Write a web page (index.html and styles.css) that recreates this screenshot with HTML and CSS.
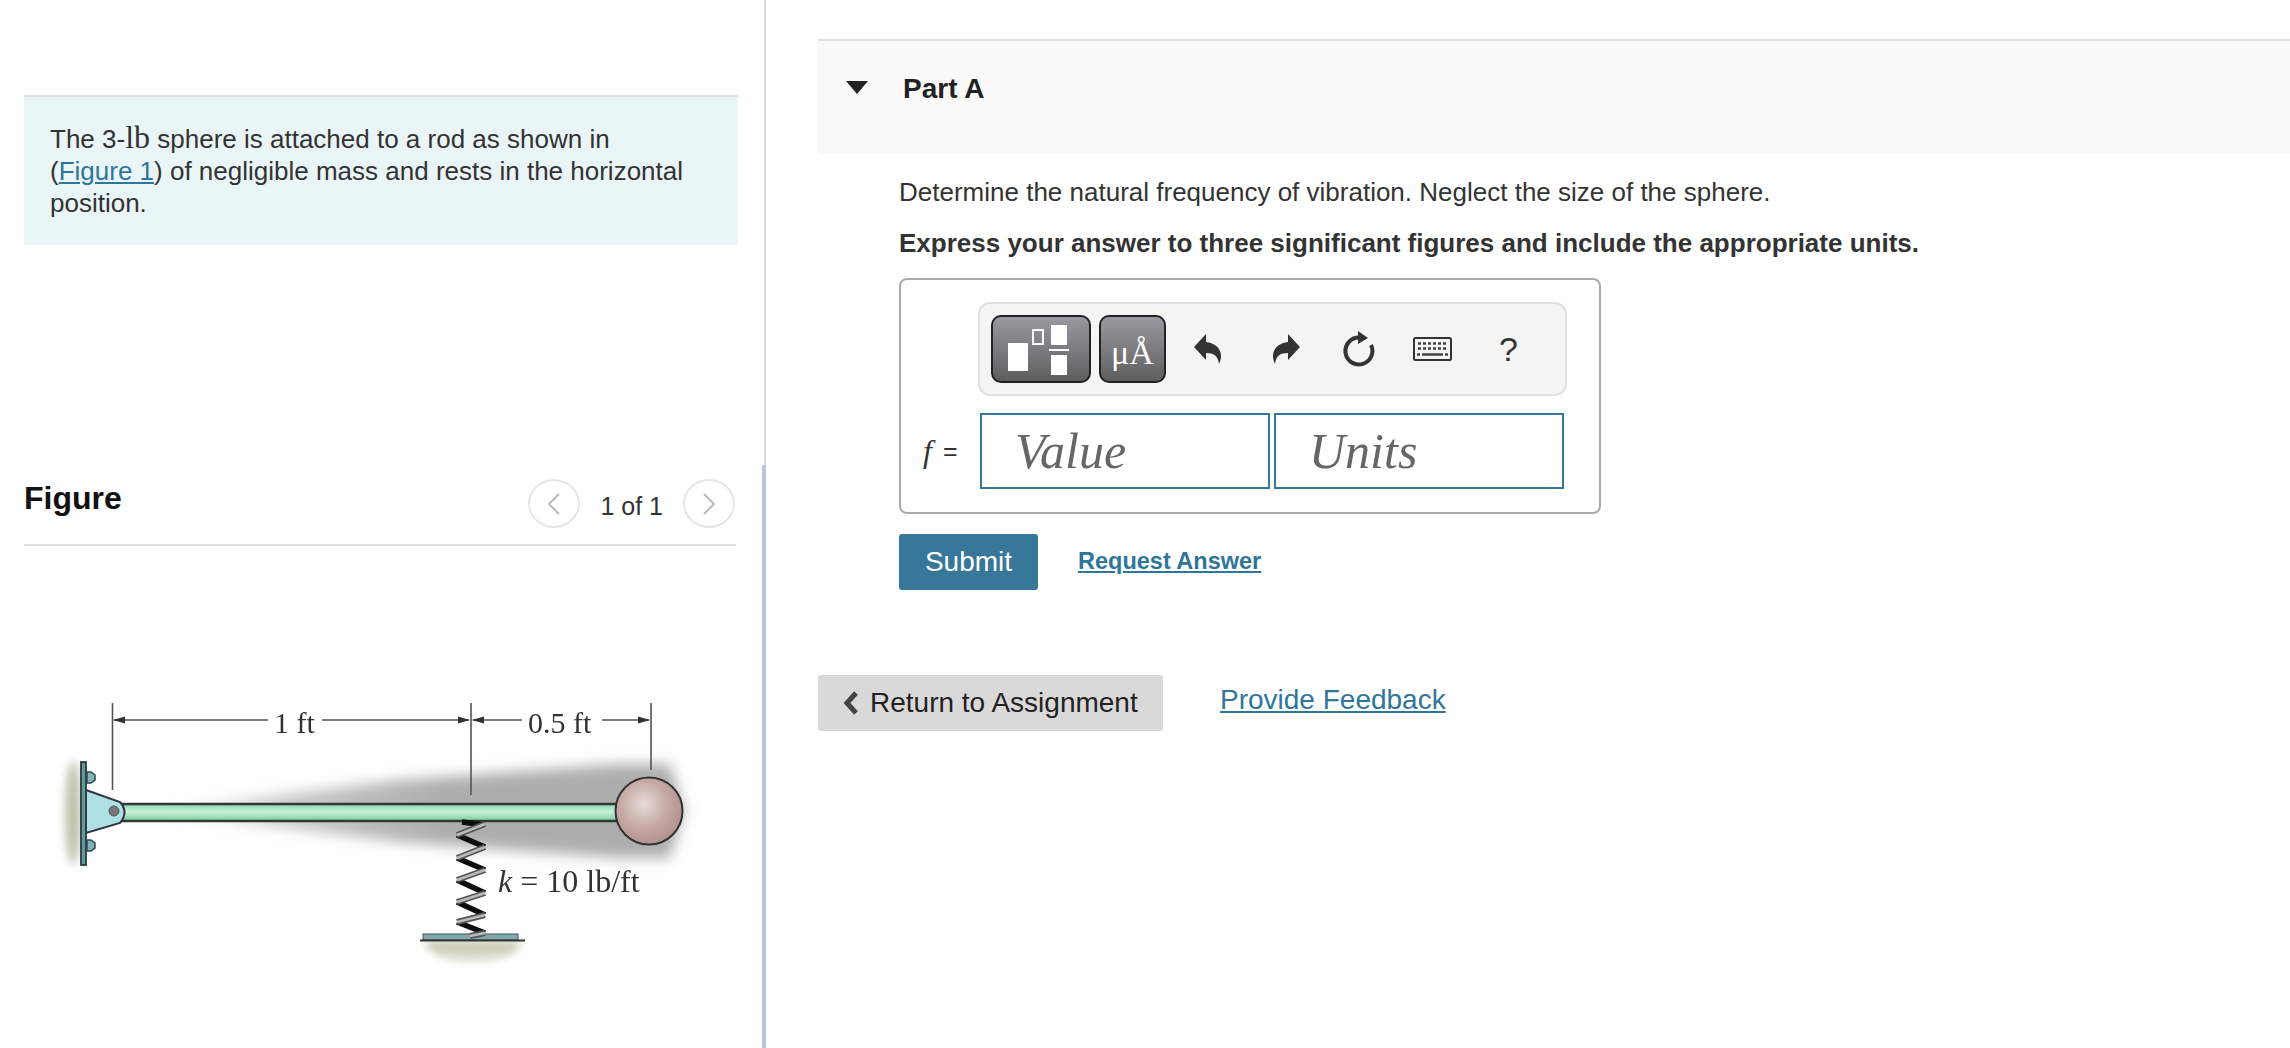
FILE: index.html
```html
<!DOCTYPE html>
<html lang="en">
<head>
<meta charset="utf-8">
<title>Part A</title>
<link rel="stylesheet" href="styles.css">
</head>
<body>
<main class="page">
  <section class="left">
    <div class="intro">
      <p>The 3-<span class="serif">lb</span> sphere is attached to a rod as shown in (<a href="#">Figure 1</a>) of negligible mass and rests in the horizontal position.</p>
    </div>
    <div class="fig-head">
      <h2>Figure</h2>
      <div class="pager">
        <span class="round"><svg width="16" height="24" viewBox="0 0 16 24"><path d="M13 2 3 12l10 10" fill="none" stroke="#bbb" stroke-width="2"/></svg></span>
        <span class="count">1 of 1</span>
        <span class="round"><svg width="16" height="24" viewBox="0 0 16 24"><path d="m3 2 10 10L3 22" fill="none" stroke="#bbb" stroke-width="2"/></svg></span>
      </div>
    </div>
    <svg class="figure" width="740" height="300" viewBox="0 680 740 300">
      <defs>
        <filter id="soft" x="-5%" y="-5%" width="110%" height="110%"><feGaussianBlur stdDeviation="0.7"/></filter>
        <filter id="shade" x="-10%" y="-40%" width="120%" height="180%"><feGaussianBlur stdDeviation="7"/></filter>
        <filter id="wall" x="-150%" y="-30%" width="400%" height="160%"><feGaussianBlur stdDeviation="4"/></filter>
        <linearGradient id="rod" x1="0" y1="0" x2="0" y2="1">
          <stop offset="0" stop-color="#86d4a4"/><stop offset=".45" stop-color="#caf2d8"/><stop offset="1" stop-color="#7ccb9a"/>
        </linearGradient>
        <linearGradient id="wake" x1="0" y1="0" x2="1" y2="0">
          <stop offset="0" stop-color="#b2b2b2" stop-opacity="0"/><stop offset=".25" stop-color="#b2b2b2" stop-opacity=".7"/><stop offset=".55" stop-color="#adadad"/><stop offset="1" stop-color="#adadad"/>
        </linearGradient>
        <radialGradient id="ball" cx=".42" cy=".4" r=".62">
          <stop offset="0" stop-color="#e6dcda"/><stop offset=".55" stop-color="#c7aaa6"/><stop offset="1" stop-color="#b1918c"/>
        </radialGradient>
        <linearGradient id="ground" x1="0" y1="0" x2="0" y2="1">
          <stop offset="0" stop-color="#bfc2a2"/><stop offset="1" stop-color="#e6e7da"/>
        </linearGradient>
      </defs>
      <g filter="url(#soft)">
        <path d="M150 811 400 780 620 764 670 764 684 811 670 858 620 858 400 842Z" fill="url(#wake)" filter="url(#shade)"/>
        <ellipse cx="73" cy="813" rx="8" ry="52" fill="#bfc2ac" filter="url(#wall)"/>
        <g stroke="#555" stroke-width="1.6" fill="none">
          <path d="M112.500 703V790M471 703V795M651 703V770"/>
          <path d="M114 720H268M322 720H469M473 720H522M602 720H649"/>
        </g>
        <path d="M113 720l12-3.500v7ZM470 720l-12-3.500v7ZM472 720l12-3.500v7ZM650 720l-12-3.500v7Z" fill="#333"/>
        <text class="dim" x="274" y="733">1 ft</text>
        <text class="dim" x="528" y="733">0.5 ft</text>

        <rect x="122" y="804" width="502" height="17" fill="url(#rod)" stroke="#2f3a34" stroke-width="2.500"/>
        <path d="M86 790 120 802Q129 812 120 823L86 833Z" fill="#aee0e4" stroke="#334" stroke-width="2"/>
        <circle cx="114" cy="811" r="5" fill="#777" stroke="#555"/>
        <rect x="81" y="762" width="5" height="103" fill="#5f9a9e" stroke="#2c3a3a" stroke-width="1.800"/>
        <path d="M87 772h4l4 3v5l-4 3h-4ZM87 840h4l4 3v5l-4 3h-4Z" fill="#7cb3b3" stroke="#345" stroke-width="1.500"/>
        <circle cx="649" cy="811" r="33.500" fill="url(#ball)" stroke="#333" stroke-width="2"/>

        <path d="M424 941H522Q515 962 472 962 432 962 424 941Z" fill="url(#ground)" filter="url(#wall)"/>
        <rect x="423" y="934" width="95" height="6" fill="#7fa9aa" stroke="#456" stroke-width="1"/>
        <path d="M420 940.500H525" stroke="#333" stroke-width="2"/>
        <path class="coil-dark" d="M462 822 484 825M457 835 485 847M457 858 485 870M457 880 485 893M457 902 485 915M457 922 485 933"/>
        <path class="coil-grey" d="M485 824 457 835M485 847 457 858M485 870 457 880M485 893 457 902M485 915 457 922M485 933 470 936"/>
        <path class="coil-light" d="M485 824 457 835M485 847 457 858M485 870 457 880M485 893 457 902M485 915 457 922M485 933 470 936"/>

        <text class="dim rate" x="498" y="892"><tspan class="ital">k</tspan> = 10 lb/ft</text>
      </g>
    </svg>
  </section>

  <section class="right">
    <header class="part">
      <svg class="caret" width="22" height="13" viewBox="0 0 22 13"><path d="M0 0H22L11 13Z" fill="#222"/></svg>
      <h3>Part A</h3>
    </header>
    <div class="body">
      <p class="q">Determine the natural frequency of vibration. Neglect the size of the sphere.</p>
      <p class="ask">Express your answer to three significant figures and include the appropriate units.</p>
      <div class="answer">
        <div class="toolbar">
          <button class="tool tpl" type="button">
            <svg width="66" height="52" viewBox="0 0 66 52">
              <rect x="0" y="20" width="20" height="28" fill="#fff"/>
              <rect x="25" y="7" width="10" height="14" fill="none" stroke="#fff" stroke-width="2"/>
              <rect x="43" y="2" width="16" height="20" fill="#fff"/>
              <rect x="41" y="26" width="20" height="2" fill="#fff"/>
              <rect x="43" y="32" width="16" height="20" fill="#fff"/>
            </svg>
          </button>
          <button class="tool unit" type="button">μÅ</button>
          <svg class="ico undo" width="28" height="30" viewBox="0 0 28 30"><path d="M0 13 12 0V8C23 9 31 18 25 30 24 22 20 19 12 19V26Z" fill="#333"/></svg>
          <svg class="ico redo" width="28" height="30" viewBox="0 0 28 30"><path d="M28 13 16 0V8C5 9-3 18 3 30 4 22 8 19 16 19V26Z" fill="#333"/></svg>
          <svg class="ico reset" width="32" height="36" viewBox="0 0 32 36"><path d="M16 6.500A13.500 13.500 0 1 0 28 14" fill="none" stroke="#333" stroke-width="4"/><path d="M15 0 25 7 15 13Z" fill="#333"/></svg>
          <svg class="ico keys" width="39" height="24" viewBox="0 0 39 24"><rect x="1" y="1" width="37" height="22" rx="1.500" fill="#f4f4f4" stroke="#333" stroke-width="2"/><path d="M5 6.500H34M5 11.500H34" stroke="#444" stroke-width="2.500" stroke-dasharray="3 2" fill="none"/><path d="M9 17.500H30" stroke="#444" stroke-width="2.500"/><path d="M4 17.500H7M32 17.500H35" stroke="#444" stroke-width="2.500"/></svg>
          <span class="help">?</span>
        </div>
        <div class="entry">
          <span class="label"><i>f</i><span class="eq">=</span></span>
          <input class="field" type="text" placeholder="Value" aria-label="Value">
          <input class="field" type="text" placeholder="Units" aria-label="Units">
        </div>
      </div>
      <div class="actions">
        <button class="submit" type="button">Submit</button>
        <a class="request" href="#">Request Answer</a>
      </div>
    </div>
    <div class="footer">
      <button class="back" type="button">
        <svg width="16" height="26" viewBox="0 0 16 26"><path d="M13 3 4 13l9 10" fill="none" stroke="#444" stroke-width="5"/></svg>
        Return to Assignment
      </button>
      <a class="feedback" href="#">Provide Feedback</a>
    </div>
  </section>
</main>
</body>
</html>
```
FILE: styles.css
```css
* { box-sizing: border-box; }
html, body { margin: 0; height: 100%; background: #fff; overflow: hidden; }
body { font-family: "Liberation Sans", Arial, sans-serif; color: #333; }
.page { display: flex; height: 1048px; }
p, h2, h3 { margin: 0; }
a { color: #2f7699; }

.left {
  position: relative;
  width: 766px;
  flex: none;
  padding: 95px 0 0 24px;
  border-right: 2px solid #d4dae6;
}
.left::after {
  content: "";
  position: absolute;
  right: -2px;
  top: 465px;
  bottom: 0;
  width: 4px;
  background: #b9c7dd;
}
.intro {
  width: 714px;
  height: 150px;
  padding: 26px 48px 0 26px;
  background: #eaf5f7;
  border-top: 2px solid #e0e0e0;
  font-size: 26px;
  line-height: 32px;
}
.serif { font-family: "Liberation Serif", serif; font-size: 32px; line-height: 1px; }
.intro a { text-decoration: underline; }

.fig-head {
  width: 712px;
  height: 301px;
  display: flex;
  justify-content: space-between;
  align-items: flex-end;
  border-bottom: 2px solid #e0e0e0;
  padding-bottom: 16px;
}
.fig-head h2 { font-size: 32px; line-height: 40px; color: #111; margin-bottom: 10px; }
.pager { display: flex; align-items: center; gap: 20px; margin-right: 1px; }
.round {
  width: 52px;
  height: 49px;
  border: 2px solid #e6e6e6;
  border-radius: 50%;
  display: flex;
  align-items: center;
  justify-content: center;
}
.count { font-size: 25px; color: #333; position: relative; top: 3px; }
.figure { display: block; margin: 134px 0 0 -24px; }
.dim { font-family: "Liberation Serif", serif; font-size: 30px; fill: #333; }
.rate { font-size: 32px; }
.ital { font-style: italic; }
.coil-dark { fill: none; stroke: #111; stroke-width: 5.500; }
.coil-grey { fill: none; stroke: #555; stroke-width: 6; }
.coil-light { fill: none; stroke: #bbb; stroke-width: 2.500; }

.right { flex: 1; min-width: 0; padding: 39px 0 0 52px; }
.part {
  height: 115px;
  display: flex;
  align-items: flex-start;
  padding: 32px 0 0 28px;
  background: #f9f9f9;
  border-top: 2px solid #e0e0e0;
}
.caret { margin: 8px 35px 0 0; }
.part h3 { font-size: 28px; line-height: 32px; color: #222; }
.body { padding: 20px 0 0 81px; }
.q { font-size: 26px; line-height: 36px; }
.ask { font-size: 26px; line-height: 36px; font-weight: 700; margin-top: 15px; }
.answer {
  width: 702px;
  height: 236px;
  margin-top: 17px;
  border: 2px solid #aaa;
  border-radius: 8px;
  padding: 22px 0 0 21px;
  background: #fff;
}
.toolbar {
  width: 589px;
  margin-left: 56px;
  height: 94px;
  display: flex;
  align-items: center;
  padding-left: 11px;
  background: #f4f4f4;
  border: 2px solid #e0e0e0;
  border-radius: 12px;
}
.tool {
  height: 68px;
  padding: 0;
  border: 2px solid #222;
  border-radius: 10px;
  background: linear-gradient(#9a98a0, #5e5e5e);
  color: #fff;
  display: flex;
  align-items: center;
  justify-content: center;
}
.tpl { width: 100px; }
.unit { width: 67px; margin-left: 8px; font: 34px "Liberation Serif", serif; padding-top: 8px; }
.ico { display: block; flex: none; }
.undo { margin-left: 28px; }
.redo { margin-left: 50px; }
.reset { margin-left: 43px; }
.keys { margin-left: 38px; }
.help { margin-left: 47px; font-size: 34px; color: #333; }
.entry { display: flex; align-items: center; margin-top: 17px; }
.label { font-size: 25px; width: 58px; display: flex; align-items: center; padding-left: 1px; }
.label i { font-family: "Liberation Serif", serif; font-size: 32px; }
.eq { margin-left: 11px; }
.field {
  width: 290px;
  height: 76px;
  border: 2px solid #37779a;
  padding: 0 0 0 33px;
  margin-right: 4px;
  border-radius: 0;
  background: #fff;
  font: italic 50px "Liberation Serif", serif;
  outline: none;
}
.field::placeholder { color: #666; opacity: 1; }
.actions { display: flex; align-items: center; margin-top: 20px; }
.submit {
  width: 139px;
  height: 56px;
  padding: 0;
  border: 0;
  border-radius: 3px;
  background: #37779a;
  color: #fff;
  font: 28px "Liberation Sans", sans-serif;
}
.request { margin-left: 40px; font-size: 23.500px; font-weight: 700; position: relative; top: -1px; }
.footer { display: flex; align-items: flex-start; margin-top: 85px; }
.back {
  width: 345px;
  height: 56px;
  padding: 0 0 0 25px;
  border: 0;
  border-radius: 3px;
  background: #d9d9d9;
  color: #222;
  font: 28px "Liberation Sans", sans-serif;
  display: flex;
  align-items: center;
  gap: 11px;
  white-space: nowrap;
}
.feedback { margin: 7px 0 0 57px; font-size: 28px; line-height: 36px; }
```
